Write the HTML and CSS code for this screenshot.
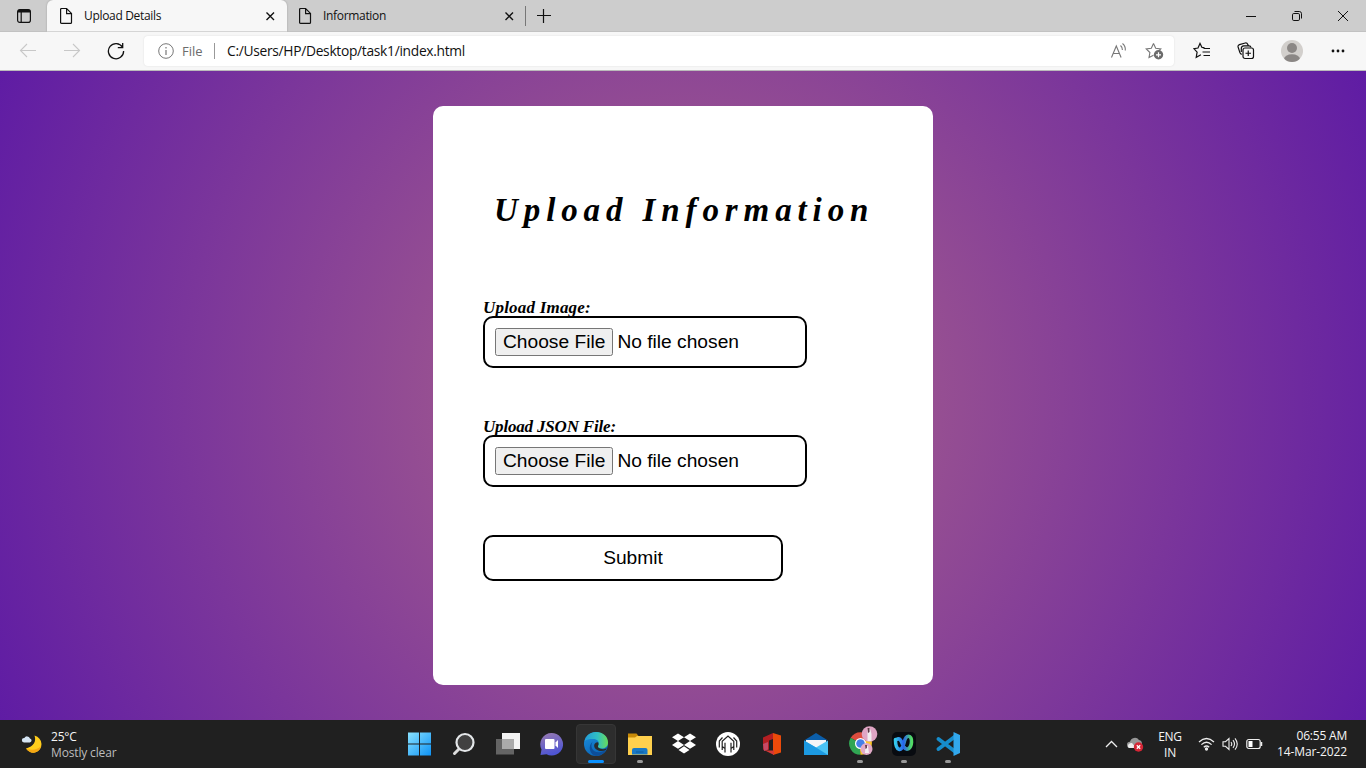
FILE: index.html
```html
<!DOCTYPE html>
<html lang="en">
<head>
<meta charset="utf-8">
<title>Upload Details</title>
<link rel="stylesheet" href="styles.css">
</head>
<body>
<header class="titlebar">
  <div class="tab-actions"><svg width="16" height="16" viewBox="0 0 16 16" fill="none" stroke="#111" stroke-width="1.2"><rect x="1.6" y="1.6" width="12.8" height="12.8" rx="2.2"/><path d="M2 3.2h12" stroke-width="2.6"/><path d="M5.2 4v10"/></svg></div>
  <div class="tab active">
    <svg class="page-icon" width="14" height="18" viewBox="0 0 14 18" fill="none" stroke="#111" stroke-width="1.2"><path d="M1.6 2.5q0-1 1-1h5l4.900 4.900v9q0 1-1 1h-8.900q-1 0-1-1zM7.600 1.800v4.800h4.800"/></svg>
    <span class="tab-title">Upload Details</span>
    <svg class="close" width="10" height="10" viewBox="0 0 10 10" stroke="#111" stroke-width="1.400"><path d="M1.500 1.500l7.500 7.500M9 1.500L1.500 9"/></svg>
  </div>
  <div class="tab second">
    <svg class="page-icon" width="14" height="18" viewBox="0 0 14 18" fill="none" stroke="#111" stroke-width="1.2"><path d="M1.6 2.5q0-1 1-1h5l4.900 4.900v9q0 1-1 1h-8.900q-1 0-1-1zM7.600 1.800v4.800h4.800"/></svg>
    <span class="tab-title">Information</span>
    <svg class="close" width="10" height="10" viewBox="0 0 10 10" stroke="#111" stroke-width="1.400"><path d="M1.500 1.500l7.500 7.500M9 1.500L1.500 9"/></svg>
  </div>
  <svg class="new-tab" width="14" height="14" viewBox="0 0 14 14" stroke="#111" stroke-width="1.2"><path d="M0 6.500h14M6.500 0v14"/></svg>
  <div class="window-buttons">
    <svg width="12" height="12" viewBox="0 0 12 12" stroke="#111"><path d="M1 6.500h10"/></svg>
    <svg width="12" height="12" viewBox="0 0 12 12" fill="none" stroke="#111"><rect x="1.500" y="3.500" width="7" height="7" rx="1.300"/><path d="M3.500 1.500h4.800q2.200 0 2.200 2.200v4.800"/></svg>
    <svg width="12" height="12" viewBox="0 0 12 12" stroke="#111"><path d="M1 1l10 10M11 1L1 11"/></svg>
  </div>
</header>
<nav class="toolbar">
  <div class="nav-buttons">
    <svg width="18" height="18" viewBox="0 0 18 18" fill="none" stroke="#c8c8c8" stroke-width="1.1"><path d="M17 8.500H1.500M8 2L1.500 8.500 8 15"/></svg>
    <svg width="18" height="18" viewBox="0 0 18 18" fill="none" stroke="#c8c8c8" stroke-width="1.1"><path d="M1 8.500h15.500M10 2l6.500 6.500L10 15"/></svg>
    <svg width="18" height="18" viewBox="0 0 18 18" fill="none" stroke="#111" stroke-width="1.3"><path d="M15.500 5.200A7.600 7.600 0 1 0 16.600 9M15.700 1v4.600h-4.900"/></svg>
  </div>
  <div class="address">
    <svg width="16" height="16" viewBox="0 0 16 16" fill="none" stroke="#777"><circle cx="8" cy="8" r="7.300"/><path d="M8 7v5M8 4v1.400" stroke-width="1.200"/></svg>
    <span class="scheme">File</span>
    <span class="url">C:/Users/HP/Desktop/task1/index.html</span>
    <svg class="read" width="18" height="18" viewBox="0 0 18 18" fill="none" stroke="#777" stroke-width="1.100"><path d="M1.500 15.500L6.300 4l4.800 11.500M3.100 11.500h6.400M10.500 3.500q2 1.700 1.900 4.500M12.500 1.500q3.200 2.400 2.800 7"/></svg>
    <svg width="19" height="18" viewBox="0 0 19 18"><path d="M8.500 1.500l2.200 4.700 5.100.7-3.700 3.600M8.500 1.500L6.300 6.200l-5.100.7 3.700 3.600-.9 5.100 4.500-2.400" fill="none" stroke="#777" stroke-width="1.100"/><circle cx="13.500" cy="12.800" r="4.700" fill="#6b6b6b"/><path d="M13.500 10.300v5M11 12.800h5" stroke="#fff" stroke-width="1.200"/></svg>
  </div>
  <div class="tools">
    <svg width="18" height="18" viewBox="0 0 18 18" fill="none" stroke="#111" stroke-width="1.200"><path d="M11.500 5.700L9 5.500 7 1.400 5 6 .900 6.700l3.200 3.400-.9 5.200 4.700-2.500M10.500 6.500h6.500M9.500 10h7.500M10.500 13.500h6.500"/></svg>
    <svg width="18" height="18" viewBox="0 0 18 18" fill="none" stroke="#111" stroke-width="1.200"><rect x="6" y="6" width="10.500" height="10.500" rx="2"/><path d="M11.250 8.500v5.500M8.500 11.250H14M4.800 12.300Q3.400 12 2.900 10.600L1.100 5Q.7 3.200 2.400 2.600L8.300 1q1.800-.3 2.500 1.400l.5 1.200M4.300 10V6.500q0-2.500 2.500-2.700h5.200q1.700.1 2 1.700"/></svg>
    <svg width="22" height="22" viewBox="0 0 22 22"><defs><clipPath id="av"><circle cx="11" cy="11" r="11"/></clipPath></defs><g clip-path="url(#av)"><path d="M0 0h22v22H0z" fill="#d2cfcc"/><circle cx="11" cy="8" r="5" fill="#8b8785"/><ellipse cx="11" cy="19.300" rx="8" ry="5" fill="#8b8785"/></g></svg>
    <svg width="14" height="4" viewBox="0 0 14 4" fill="#111"><circle cx="2" cy="2" r="1.400"/><circle cx="7" cy="2" r="1.400"/><circle cx="12" cy="2" r="1.400"/></svg>
  </div>
</nav>
<main class="page">
  <form class="card">
    <h1>Upload Information</h1>
    <label class="image-label" for="image">Upload Image:</label>
    <input class="file" type="file" id="image">
    <label class="json-label" for="json">Upload JSON File:</label>
    <input class="file" type="file" id="json">
    <button class="submit" type="button">Submit</button>
  </form>
</main>
<footer class="taskbar">
  <div class="weather">
    <svg width="22" height="22" viewBox="0 0 22 22"><path d="M13.500 2.500Q16.500 12 5 15.500Q8.500 20.500 14 19.500Q20.500 17.500 20.500 11Q20 4.500 13.500 2.500Z" fill="#ffcd1c"/><path d="M5 15.500Q8.500 20.500 14 19.500Q19 18 20 13Q14 19 5 15.500Z" fill="#f5a713"/><path d="M3 9.500a2.300 2.300 0 0 1 .3-4.600A3.200 3.200 0 0 1 9 5.400a2.100 2.100 0 0 1-.2 4.100z" fill="#d5e4f3"/></svg>
    <div><div class="temp">25°C</div><div class="sky">Mostly clear</div></div>
  </div>
  <div class="apps">
    <div class="app"><svg width="24" height="24" viewBox="0 0 24 24"><defs><linearGradient id="w" gradientUnits="userSpaceOnUse" x1="0" y1="0" x2="24" y2="24"><stop stop-color="#8be3ff"/><stop offset="1" stop-color="#0a90f5"/></linearGradient></defs><path d="M0 .500h11v11h-11zM12 .500h11v11h-11zM0 12.500h11v11h-11zM12 12.500h11v11h-11z" fill="url(#w)"/></svg></div>
    <div class="app"><svg width="24" height="24" viewBox="0 0 24 24"><path d="M7.500 16.500L2.500 21.500" stroke="#ddd" stroke-width="3" stroke-linecap="round"/><circle cx="13" cy="10.500" r="8.500" fill="#414141" stroke="#e4e7e9" stroke-width="2.200"/></svg></div>
    <div class="app"><svg width="24" height="24" viewBox="0 0 24 24"><path d="M6 1h18v16H6z" fill="#f3f3f3"/><path d="M0 7h18v15.500H0z" fill="#646464"/><path d="M6 7h12v10H6z" fill="#aaa"/></svg></div>
    <div class="app"><svg width="24" height="24" viewBox="0 0 24 24"><defs><linearGradient id="c" x2=".3" y2="1"><stop stop-color="#9a7bb0"/><stop offset="1" stop-color="#4e55d4"/></linearGradient></defs><path d="M11.500 1a11.300 11.300 0 1 1-5 21.300L.500 23l1-5.500A11.300 11.300 0 0 1 11.500 1z" fill="url(#c)"/><rect x="5" y="7" width="9.500" height="10" rx="1" fill="#fff"/><path d="M15.500 10.500L18 8v8l-2.500-2.500z" fill="#fff"/></svg></div>
    <div class="app current"><svg width="24" height="24" viewBox="0 0 24 24"><defs><linearGradient id="e1" x2="1"><stop stop-color="#239bd8"/><stop offset=".55" stop-color="#30bfc4"/><stop offset="1" stop-color="#69dc59"/></linearGradient><linearGradient id="e2" x2=".5" y2="1"><stop stop-color="#1c91df"/><stop offset="1" stop-color="#0b65b7"/></linearGradient></defs><circle cx="12" cy="12" r="12" fill="url(#e2)"/><path d="M.4 9.500C1.500 3.700 6.200 0 12 0c7 0 12 4.500 12 10.500 0 4-3 6-6.500 6-3 0-4.500-1-3.500-2.500 2.300-4.500-1-7-5-7-3.800 0-7 .6-8.600 2.500z" fill="url(#e1)"/><path d="M9 9.500C5 14 9 22 17 20c2-.6 3-1.500 4.700-1.200A12 12 0 0 1 12 24C6 23 3 14 9 9.500z" fill="#0d4e9a"/><path d="M14 14c-.8 2 4.500 4.500 8.700 2.300l-.8 1.700C16 21 8.500 17 10.500 12q1.800-2.500 3.800-1.500.7 1.500-.3 3.500z" fill="#292b2c"/></svg><i class="mark wide"></i></div>
    <div class="app"><svg width="24" height="24" viewBox="0 0 24 24"><path d="M0 1.500h8.500l2 2.500v5H0z" fill="#c88a08"/><path d="M0 5.500h7l2-1.500h15v19H0z" fill="#ffd04d"/><path d="M4 22.500V18q0-2 2-2h11.500q2 0 2 2v4.500z" fill="#1978c4"/><path d="M8 19.500h7.500v1H8z" fill="#0c5a9a"/></svg><i class="mark"></i></div>
    <div class="app"><svg width="24" height="24" viewBox="0 0 24 24" fill="#fff"><path d="M6 1.500l6 3.800-6 3.800-6-3.800zM18 1.500l6 3.800-6 3.800-6-3.800zM6 9.100l6 3.800-6 3.800-6-3.800zM18 9.100l6 3.800-6 3.800-6-3.800zM12 14.200l5.500 3.700-5.500 3.700-5.500-3.700z"/></svg></div>
    <div class="app"><svg width="24" height="24" viewBox="0 0 24 24" fill="none"><circle cx="12" cy="12" r="12" fill="#fff"/><path d="M6.200 18V9.200L12 4l5.800 5.200V18M9 16.500v-5.800M15 16.500v-5.800M6.500 5.500L3.300 9v6.500M17.500 5.500L20.700 9v6.500M9 20.500v-4l-2.800-2M15 20.500v-4l2.800-2" stroke="#222" stroke-width="1.200"/></svg></div>
    <div class="app"><svg width="24" height="24" viewBox="0 0 24 24"><path d="M3 5.500L13 1v6l-4 1.500v9L6 19l-3-1.500z" fill="#b41e22"/><path d="M13 1l8 2.500v17L13 23z" fill="#eb4a0a"/><path d="M5 18.500h9V23z" fill="#d73835"/><path d="M3 12l5-2v7.500l-4 1.500z" fill="#c54a67"/></svg></div>
    <div class="app"><svg width="24" height="24" viewBox="0 0 24 24"><path d="M0 8.500L12 1l12 7.500z" fill="#0b5eaa"/><path d="M2 8h20v9H2z" fill="#f4f5f7"/><path d="M0 8.500l12 7 12-7V23H0z" fill="#4cc4f4"/><path d="M0 8.500V23h24L12 15.500z" fill="#1c9ae2"/></svg></div>
    <div class="app"><svg class="chrome" width="30" height="32" viewBox="0 0 30 32"><path d="M12.500 19.500L2.700 13.800A11.300 11.300 0 0 1 22.300 13.800z" fill="#dc4c3e"/><path d="M12.500 19.500L2.700 13.800A11.300 11.300 0 0 0 12.500 30.800z" fill="#30a653"/><path d="M12.500 19.500h-1l1 11.300A11.300 11.300 0 0 0 22.300 13.800z" fill="#fdc727"/><circle cx="12.500" cy="19.500" r="5.500" fill="#fff"/><circle cx="12.500" cy="19.500" r="4.300" fill="#4580e8"/><circle cx="21.500" cy="10" r="7.800" fill="#dfa5c4"/><path d="M19.500 5q2-2 3 1l1 4v7h-4z" fill="#f1edf0"/><path d="M19.500 4h2v4l-1.500 1z" fill="#5b3445"/><circle cx="18.500" cy="25" r="6" fill="#e2abc7"/><path d="M17.500 22h2.500l1 7h-4z" fill="#f5eef2"/><path d="M17 21h2v3l-1.500 1z" fill="#6b4150"/></svg><i class="mark"></i></div>
    <div class="app"><svg width="24" height="24" viewBox="0 0 24 24"><defs><linearGradient id="x" x2="1"><stop stop-color="#35c8eb"/><stop offset=".5" stop-color="#2864ed"/><stop offset="1" stop-color="#52dc65"/></linearGradient></defs><rect width="24" height="24" rx="5" fill="#080b10"/><path d="M3.500 7.500c0 12 6.500 13 8.500 3.500s8-8 7.500-1-5 9-7.500 5-3-10-7.500-7.500" fill="none" stroke="url(#x)" stroke-width="3.600" stroke-linecap="round"/></svg><i class="mark"></i></div>
    <div class="app"><svg width="24" height="24" viewBox="0 0 24 24"><path d="M2.500 7L19 19.500M2.500 17L19 4.500" stroke="#168dcc" stroke-width="3.800" stroke-linecap="round"/><path d="M17.500 0L24 3v18l-6.500 3z" fill="#32a8ed"/></svg><i class="mark"></i></div>
  </div>
  <div class="tray">
    <svg class="chevron" width="13" height="8" viewBox="0 0 13 8" fill="none" stroke="#eee" stroke-width="1.300"><path d="M1 7l5.500-5.500L12 7"/></svg>
    <svg class="cloud" width="17" height="15" viewBox="0 0 17 15"><path d="M3.200 11a3.100 3.100 0 0 1-.2-6.200A5 5 0 0 1 12 3q3 .5 3 4l-1 4z" fill="#979797"/><path d="M1 10q-.5-4 4-4l4 5H2z" fill="#ededed"/><circle cx="11.500" cy="10" r="4.700" fill="#d62535"/><path d="M9.800 8.300l3.400 3.400M13.200 8.300l-3.400 3.400" stroke="#fff" stroke-width="1.300"/></svg>
    <div class="lang">ENG<br>IN</div>
    <svg class="wifi" width="17" height="14" viewBox="0 0 17 14" fill="none" stroke="#eee" stroke-width="1.300"><path d="M1 5q7.500-7 15 0M3.400 7.600q5.100-4.800 10.200 0M5.800 10.200q2.700-2.500 5.400 0"/><circle cx="8.500" cy="12" r="1" fill="#eee"/></svg>
    <svg class="sound" width="17" height="14" viewBox="0 0 17 14" fill="none" stroke="#eee" stroke-width="1.100"><path d="M1 4.700h2.500L7 1.500v11L3.500 9.300H1zM9 5q1.500 2 0 4M11 3.200q3 3.800 0 7.600M13 1.300q4.500 5.700 0 11.400"/></svg>
    <svg class="battery" width="17" height="12" viewBox="0 0 17 12" fill="none" stroke="#eee" stroke-width="1.200"><rect x=".8" y="1.500" width="13.400" height="9" rx="2"/><path d="M2.500 3h4v6h-4z" fill="#fff" stroke="none"/><path d="M15.500 4v4" stroke-width="1.500"/></svg>
    <div class="clock"><span class="time">06:55 AM</span><br><span class="date">14-Mar-2022</span></div>
  </div>
</footer>
</body>
</html>
```
FILE: styles.css
```css
* { box-sizing: border-box; }
body { margin: 0; width: 1366px; height: 768px; overflow: hidden; display: flex; flex-direction: column; font: 12px/16px "Open Sans", sans-serif; color: #111; }
svg { display: block; flex: none; }
.titlebar { height: 32px; background: #cdcdcd; display: flex; align-items: center; border-bottom: 1px solid #c2c2c2; }
.tab-actions { width: 47px; padding-left: 16px; }
.tab { height: 32px; width: 240px; display: flex; align-items: center; padding: 0 12px; }
.tab.active { background: #f7f7f7; border-radius: 6px 6px 0 0; box-shadow: 0 0 2px #999; clip-path: inset(0 -3px 0 -3px); }
.tab.second { width: 239px; padding: 0 11px; border-right: 1px solid #777; height: 20px; }
.page-icon { margin-right: 11px; }
.tab-title { white-space: nowrap; letter-spacing: -.32px; }
.close { margin-left: auto; }
.new-tab { margin-left: 11px; }
.window-buttons { margin-left: auto; display: flex; gap: 34px; padding-right: 17px; }
.toolbar { height: 39px; background: #f7f7f7; border-bottom: 1px solid #bbb; display: flex; align-items: center; }
.nav-buttons { width: 144px; padding-left: 19px; display: flex; gap: 26px; }
.address { width: 1030px; height: 30px; background: #fff; border-radius: 4px; box-shadow: 0 0 2px #ddd; display: flex; align-items: center; padding: 0 10px 0 14px; }
.scheme { color: #6c6c6c; margin-left: 8px; border-right: 1px solid #999; font-size: 13px; width: 33px; }
.url { margin-left: 12px; letter-spacing: -.3px; white-space: nowrap; font-size: 13.8px; }
.read { margin-left: auto; margin-right: 17px; }
.tools { display: flex; align-items: center; flex: 1; padding: 0 21px 0 19px; gap: 26px; }
.tools svg:nth-child(4) { margin-left: 2px; }
.page { height: 649px; padding-top: 35px; background: radial-gradient(circle, #964f92 250px, #5f1ca4 756px); display: flex; justify-content: center; align-items: flex-start; }
.card { width: 500px; height: 579px; background: #fff; border-radius: 10px; padding: 82px 50px 0; display: flex; flex-direction: column; align-items: flex-start; color: #000; }
h1 { margin: 0 0 67px; width: 400px; height: 44px; padding-left: 11px; font: italic bold 33px/44px "Liberation Serif", serif; letter-spacing: 5.9px; white-space: nowrap; }
label { font: italic bold 17px/18px "Liberation Serif", serif; height: 17px; }
.image-label { letter-spacing: .2px; }
.json-label { letter-spacing: -.18px; }
.file { box-sizing: content-box; width: 300px; height: 28px; padding: 10px; border: 2px solid #000; border-radius: 10px; font: 19.2px "Liberation Sans", Arial, sans-serif; margin-bottom: 50px; color: #000; }
.file + .submit { margin-top: -2px; }
.submit { width: 300px; height: 46px; background: #fff; border: 2px solid #000; border-radius: 10px; font: 19.2px "Liberation Sans", Arial, sans-serif; color: #000; }
.taskbar { height: 48px; background: #202020; color: #f5f5f5; display: grid; grid-template-columns: 398px 572px 396px; align-items: center; }
.weather { display: flex; gap: 8px; padding-left: 21px; align-items: center; white-space: nowrap; }
.weather > div { padding-top: 1px; }
.temp { letter-spacing: -.2px; }
.sky { color: #bdbdbd; letter-spacing: -.15px; }
.apps { display: flex; }
.app { width: 44px; height: 48px; display: flex; align-items: center; justify-content: center; position: relative; }
.app.current { width: 40px; height: 40px; margin: 4px 2px; background: #2d2d2d; border: 1px solid #363636; border-radius: 4px; }
.mark { position: absolute; bottom: 5px; left: 19px; width: 6px; height: 3px; border-radius: 2px; background: #999; }
.mark.wide { width: 16px; left: 11px; bottom: 0; background: #0a91ff; }
.chrome { margin: -9px 0 0 5px; }
.tray { display: flex; align-items: center; padding-left: 135px; text-align: center; white-space: nowrap; }
.cloud { margin-left: 9px; }
.lang { width: 28px; margin-left: 12px; padding-top: 2px; letter-spacing: -.3px; }
.wifi { margin-left: 14px; }
.sound { margin-left: 7px; }
.battery { margin-left: 7px; }
.clock { margin-left: auto; padding-right: 19px; text-align: right; }
.time { letter-spacing: -.2px; }
.date { letter-spacing: -.12px; }
```
